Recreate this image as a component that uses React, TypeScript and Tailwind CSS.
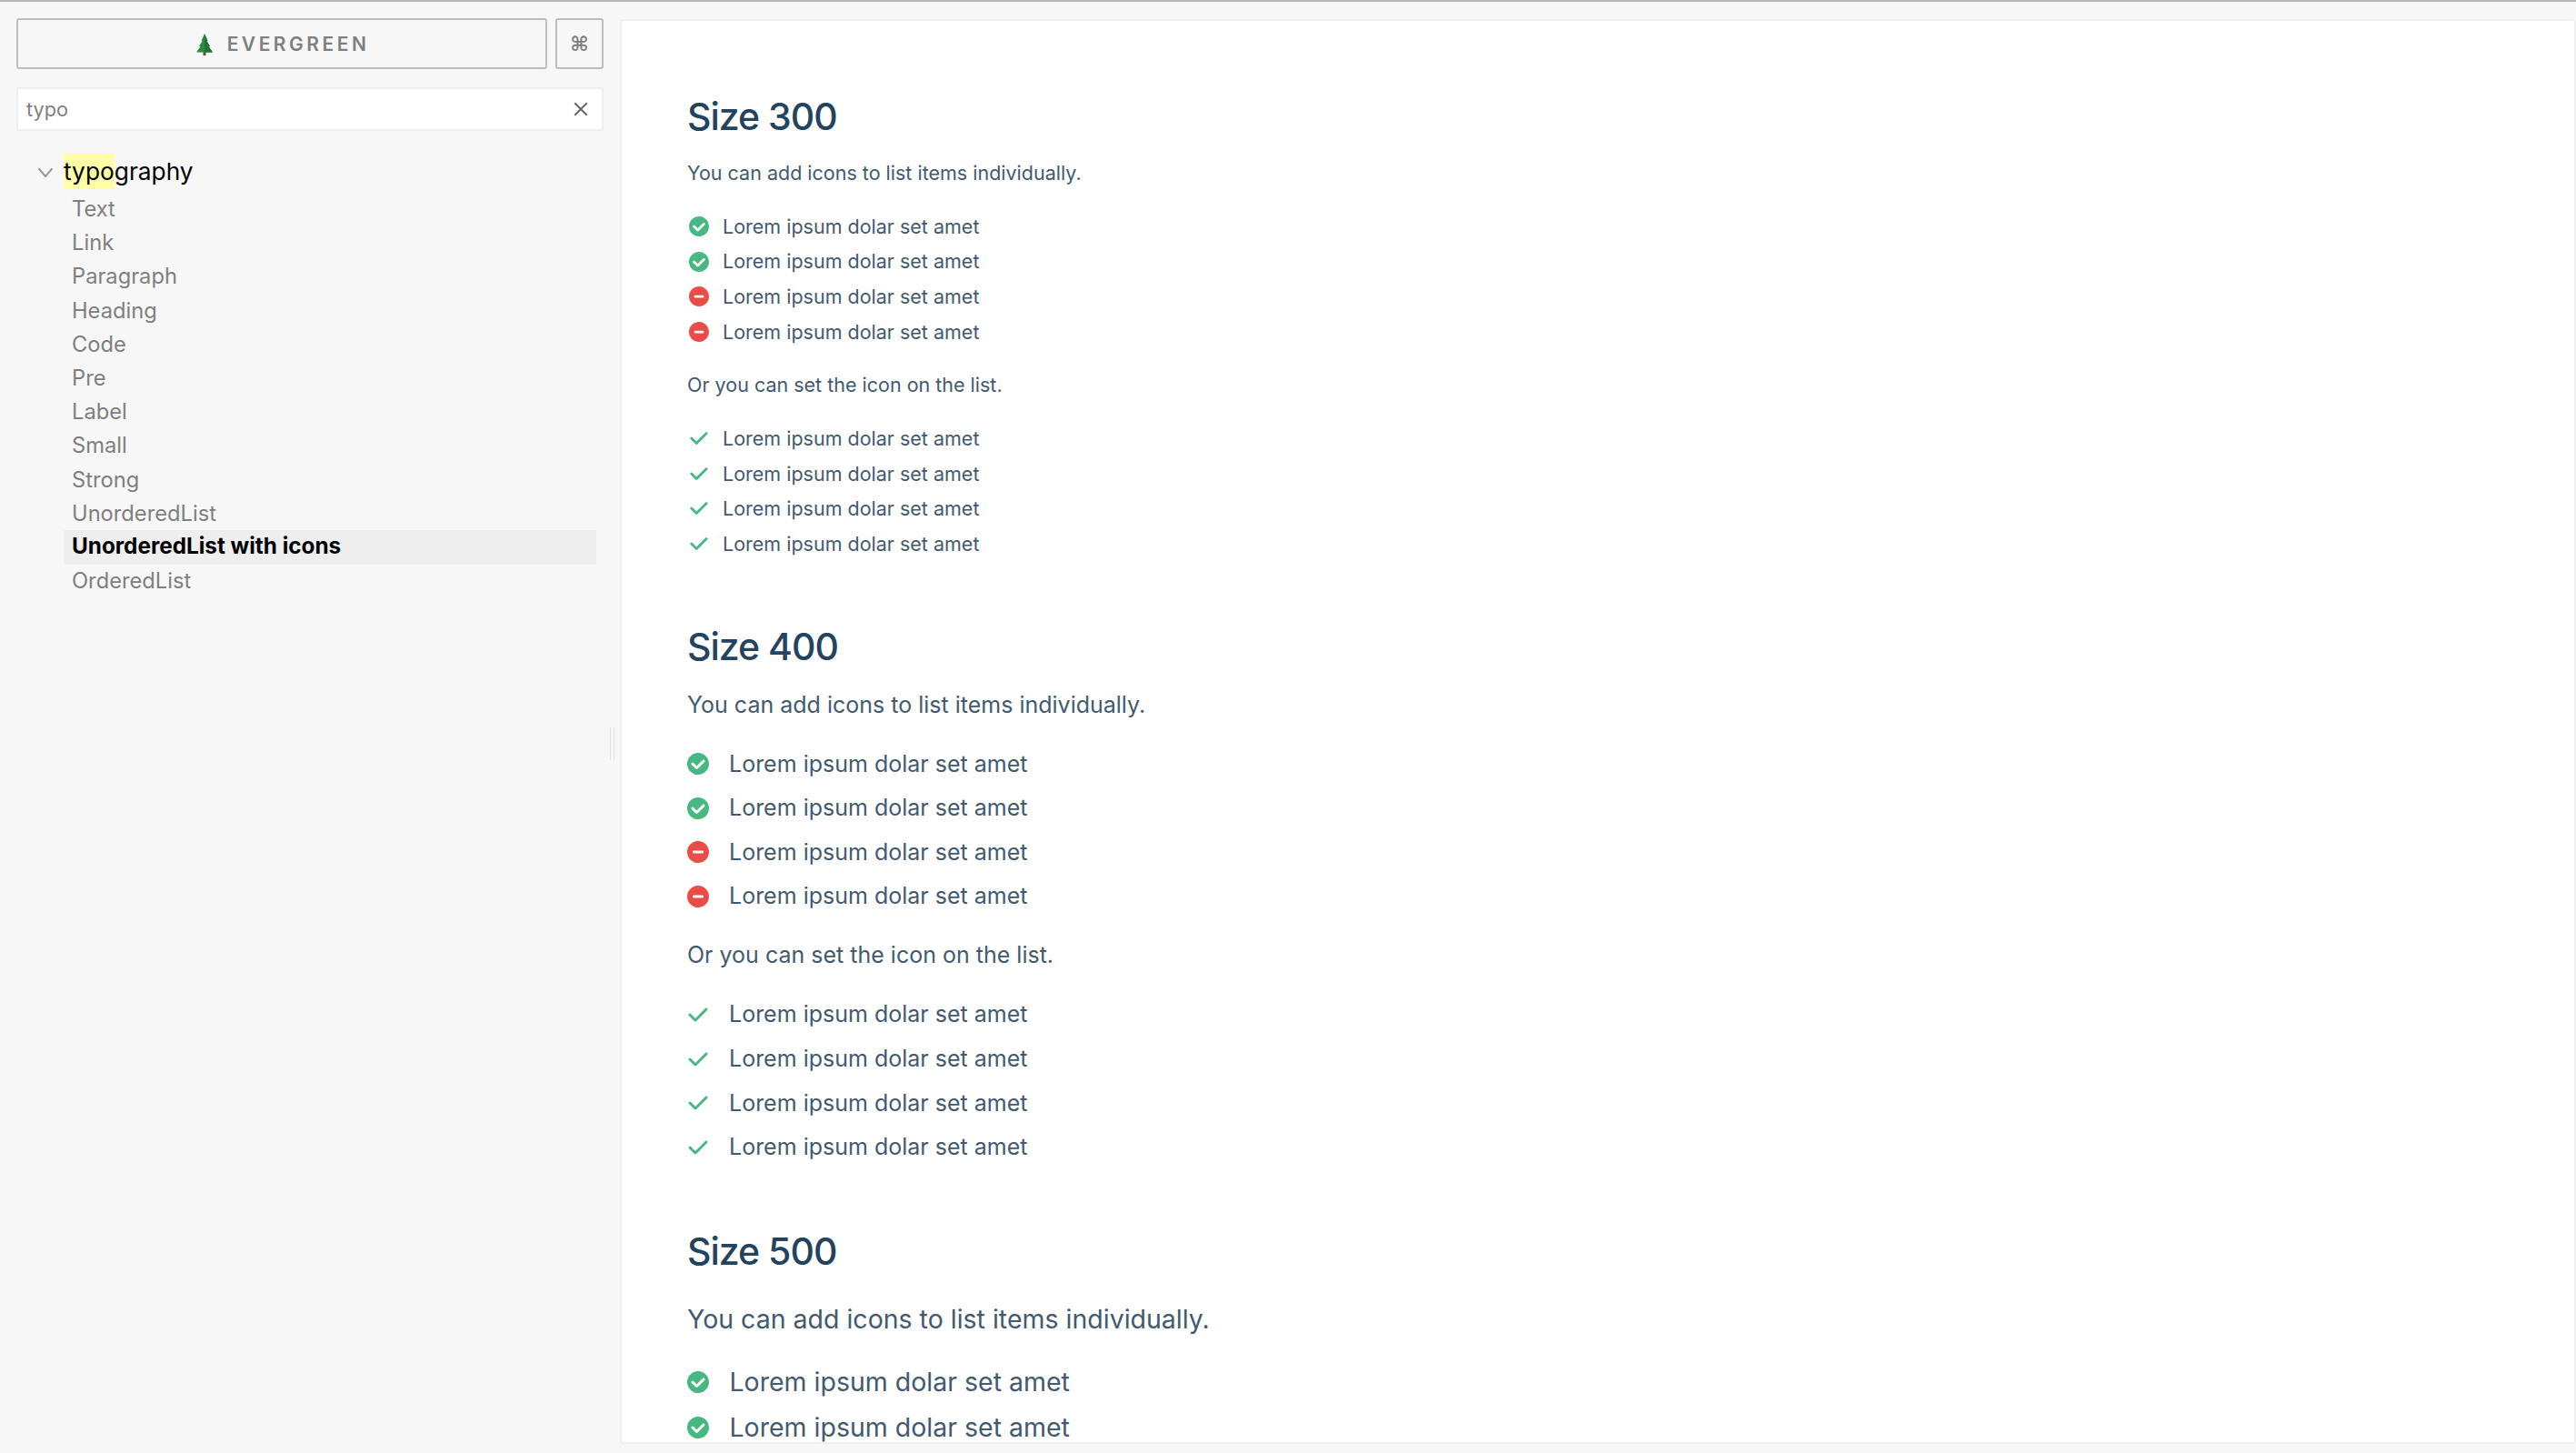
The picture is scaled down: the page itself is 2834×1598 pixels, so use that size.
import React from "react";

const TICK_CIRCLE = "M8 0C3.58 0 0 3.58 0 8s3.58 8 8 8 8-3.58 8-8-3.58-8-8-8zm4 5c-.28 0-.53.11-.71.29L7 9.59l-2.29-2.3a1.003 1.003 0 00-1.42 1.42l3 3c.18.18.43.29.71.29s.53-.11.71-.29l5-5A1.003 1.003 0 0012 5z";
const MINUS = "M8 0C3.58 0 0 3.58 0 8s3.58 8 8 8 8-3.58 8-8-3.58-8-8-8zm3 9H5c-.55 0-1-.45-1-1s.45-1 1-1h6c.55 0 1 .45 1 1s-.45 1-1 1z";
const TICK = "M14 3c-.28 0-.53.11-.71.29L6 10.59l-3.29-3.3a1.003 1.003 0 00-1.42 1.42l4 4c.18.18.43.29.71.29s.53-.11.71-.29l8-8A1.003 1.003 0 0014 3z";

function Icon({ d, color, size }: { d: string; color: string; size: number }) {
  return (
    <svg viewBox="0 0 16 16" width={size} height={size} fill={color} className="shrink-0">
      <path fillRule="evenodd" d={d} />
    </svg>
  );
}

const GREEN = "#47B881";
const RED = "#EC4C47";

function Row({ d, color, cls, gap, size }: { d: string; color: string; cls: string; gap: string; size: number }) {
  return (
    <div className={`flex items-center ${cls}`}>
      <Icon d={d} color={color} size={size} />
      <span className={gap}>Lorem ipsum dolar set amet</span>
    </div>
  );
}

function Section({
  title,
  titleCls,
  paraCls,
  rowCls,
  gap,
  orCls,
  listTopCls,
  size,
}: {
  title: string;
  titleCls: string;
  paraCls: string;
  rowCls: string;
  gap: string;
  orCls: string;
  listTopCls: string;
  size: number;
}) {
  return (
    <section className={titleCls}>
      <h2 className="text-[41px] leading-[58px] font-[550] tracking-[-1px] text-[#234361]">{title}</h2>
      <p className={paraCls}>You can add icons to list items individually.</p>
      <div className={listTopCls}>
        <Row d={TICK_CIRCLE} color={GREEN} cls={rowCls} gap={gap} size={size} />
        <Row d={TICK_CIRCLE} color={GREEN} cls={rowCls} gap={gap} size={size} />
        <Row d={MINUS} color={RED} cls={rowCls} gap={gap} size={size} />
        <Row d={MINUS} color={RED} cls={rowCls} gap={gap} size={size} />
      </div>
      {orCls && <p className={orCls}>Or you can set the icon on the list.</p>}
      {orCls && (
        <div className={listTopCls}>
          <Row d={TICK} color={GREEN} cls={rowCls} gap={gap} size={size} />
          <Row d={TICK} color={GREEN} cls={rowCls} gap={gap} size={size} />
          <Row d={TICK} color={GREEN} cls={rowCls} gap={gap} size={size} />
          <Row d={TICK} color={GREEN} cls={rowCls} gap={gap} size={size} />
        </div>
      )}
    </section>
  );
}

const ITEMS = ["Text", "Link", "Paragraph", "Heading", "Code", "Pre", "Label", "Small", "Strong", "UnorderedList"];

function Tree() {
  return (
    <svg viewBox="0 0 22 24" width="22" height="24" className="shrink-0">
      <rect x="9.5" y="19" width="3" height="5" fill="#7a4a22" />
      <path d="M11 0 L14.5 8 L13.5 8 L17 14 L15.5 14 L20 20.5 L2 20.5 L6.5 14 L5 14 L8.5 8 L7.5 8 Z" fill="#2e8b45" />
      <path d="M11 0 L14.5 8 L13.5 8 L17 14 L15.5 14 L20 20.5 L11 20.5 Z" fill="#23703a" />
    </svg>
  );
}

export default function App() {
  return (
    <div className="h-[1598px] w-[2834px] overflow-hidden bg-[#f7f7f7] font-['Inter',sans-serif] border-t-2 border-[#b8b8b8] flex">
      <aside className="w-[682px] shrink-0 pl-[18px] pr-[18px] pt-[18px] relative">
        <div className="flex gap-[9px] h-[56px]">
          <div className="flex-1 border-2 border-[#bdbdbd] rounded-[3px] flex items-center justify-center gap-[14px] pt-[1px]">
            <Tree />
            <span className="text-[21px] font-semibold tracking-[3.5px] text-[#7f7f7f]">EVERGREEN</span>
          </div>
          <div className="w-[53px] border-2 border-[#bdbdbd] rounded-[3px] flex items-center justify-center text-[22px] font-bold text-[#7f7f7f] font-['DejaVu_Sans',sans-serif]">
            ⌘
          </div>
        </div>
        <div className="mt-[20px] h-[48px] bg-white border-2 border-[#efefef] rounded-[2px] flex items-center justify-between pl-[9px] pr-[14px]">
          <span className="text-[21.7px] leading-[30px] pb-[1px] text-[#7f7f7f]">typo</span>
          <svg viewBox="0 0 16 16" width="18" height="18" stroke="#666" strokeWidth="1.8" className="shrink-0">
            <path d="M2 2 L14 14 M14 2 L2 14" />
          </svg>
        </div>
        <div className="mt-[29px] pl-[52px]">
          <div className="relative h-[31px] flex items-center text-[26.3px] text-black">
            <svg viewBox="0 0 16 16" width="20" height="20" fill="none" stroke="#8a9aa8" strokeWidth="1.6" className="absolute left-[-30px] top-[6px]">
              <path d="M2 5 L8 12 L14 5" />
            </svg>
            <span className="bg-[#ffffa8]">typo</span>
            <span>graphy</span>
          </div>
          <div className="mt-[7px] text-[23.7px] text-[#7f7f7f]">
            {ITEMS.map((t) => (
              <div key={t} className="h-[37.2px] leading-[37.2px] pl-[9px]">{t}</div>
            ))}
            <div className="h-[38px] leading-[35px] pl-[9px] bg-[#eeeeee] font-bold text-[24.3px] text-black w-[586px]">UnorderedList with icons</div>
            <div className="h-[37px] leading-[35px] pl-[9px]">OrderedList</div>
          </div>
        </div>
        <div className="absolute right-[6px] top-[798px] w-[5px] h-[36px] border-x border-[#e2e2e2]" />
      </aside>
      <main className="flex-1 mt-[19px] mb-[10px] bg-white border-2 border-[#efefef] rounded-[4px] overflow-hidden pl-[72px] text-[#425A70]">
        <Section
          title="Size 300"
          titleCls="pt-[76px]"
          paraCls="mt-[17px] text-[21.5px] leading-[32px]"
          rowCls="h-[38.7px] text-[21.5px] pl-[1.5px]"
          gap="ml-[15.5px]"
          orCls="mt-[23px] text-[21.5px] leading-[32px]"
          listTopCls="mt-[23.5px]"
          size={22}
        />
        <Section
          title="Size 400"
          titleCls="pt-[64px]"
          paraCls="mt-[17px] text-[25px] leading-[36px]"
          rowCls="h-[48.6px] text-[25px]"
          gap="ml-[22px]"
          orCls="mt-[22px] text-[25px] leading-[36px]"
          listTopCls="mt-[23.5px]"
          size={24}
        />
        <Section
          title="Size 500"
          titleCls="pt-[61px]"
          paraCls="mt-[25px] text-[28.5px] leading-[42px]"
          rowCls="h-[50px] text-[28.5px]"
          gap="ml-[22.5px]"
          orCls=""
          listTopCls="mt-[23px]"
          size={24}
        />
      </main>
    </div>
  );
}
